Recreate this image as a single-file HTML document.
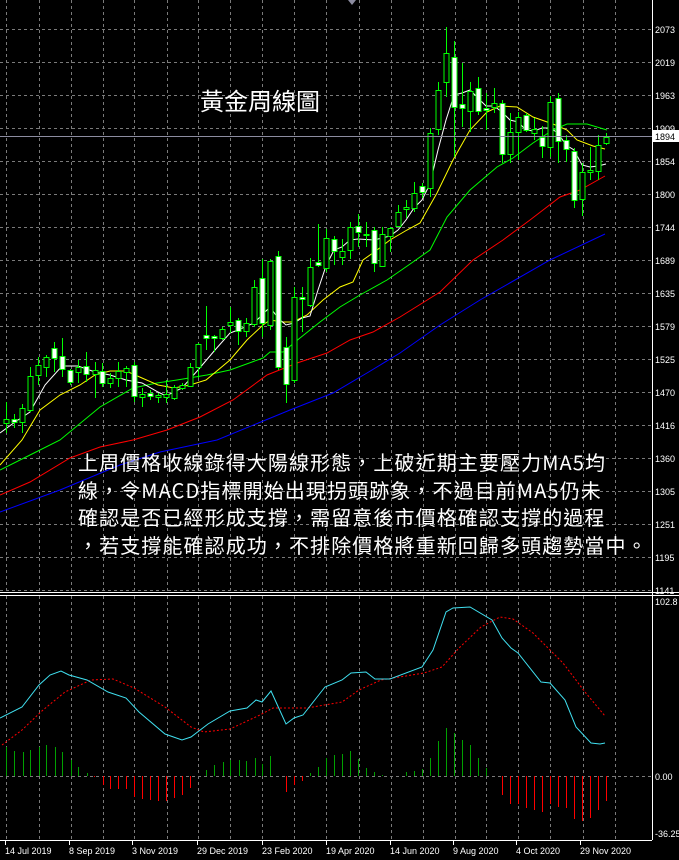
<!DOCTYPE html>
<html><head><meta charset="utf-8">
<style>
html,body{margin:0;padding:0;background:#000;width:679px;height:860px;overflow:hidden}
svg{position:absolute;left:0;top:0}
.t{position:absolute;color:#fff;font-family:"Noto Sans CJK TC","Liberation Sans",sans-serif;white-space:nowrap}
</style></head><body>
<svg id="s" width="679" height="860" xmlns="http://www.w3.org/2000/svg" font-family="Liberation Sans, sans-serif" font-size="9">
<rect width="679" height="860" fill="#000"/>
<g id="grid" stroke="#7a7a7a" stroke-width="1" stroke-dasharray="3,3"></g>
<g id="mas" fill="none" stroke-width="1"></g>
<g id="c"></g>
<g id="macd"></g>
<line x1="0" y1="136.5" x2="652" y2="136.5" stroke="#8c8ca0"/>
<line x1="652.5" y1="0" x2="652.5" y2="840" stroke="#fff"/>
<line x1="0" y1="592.5" x2="679" y2="592.5" stroke="#fff"/>
<line x1="0" y1="595.5" x2="679" y2="595.5" stroke="#fff"/>
<line x1="0" y1="840.5" x2="652" y2="840.5" stroke="#fff"/>
<polygon points="348,0 356,0 352,5" fill="#8c8ca0"/>
<g id="lab" fill="#fff"></g>
<rect x="653" y="130" width="26" height="12" fill="#fff"/>
<text x="655" y="140" fill="#000">1894</text>
</svg>
<div class="t" style="left:200px;top:84px;font-size:24px;line-height:32px">黃金周線圖</div>
<div class="t" style="left:78px;top:448px;font-size:20px;letter-spacing:1.1px;line-height:27.6px">上周價格收線錄得大陽線形態，上破近期主要壓力MA5均<br>線，令MACD指標開始出現拐頭跡象，不過目前MA5仍未<br>確認是否已經形成支撐，需留意後市價格確認支撐的過程<br>，若支撐能確認成功，不排除價格將重新回歸多頭趨勢當中。</div>
<script>
var NS="http://www.w3.org/2000/svg";
function el(p,n,a){var e=document.createElementNS(NS,n);for(var k in a)e.setAttribute(k,a[k]);p.appendChild(e);return e;}
var g=document.getElementById('grid');
var vx=[6,39,71,103,134,167,198,230,262,294,326,359,391,423,455,486,518,550,583,615];
vx.forEach(function(x){el(g,'line',{x1:x+.5,y1:0,x2:x+.5,y2:592});el(g,'line',{x1:x+.5,y1:596,x2:x+.5,y2:840});});
var py=[[2073,29],[2019,62],[1963,95],[1909,128],[1854,161],[1800,194],[1744,227],[1689,260],[1635,293],[1579,326],[1525,359],[1470,392],[1416,425],[1360,458],[1305,491],[1251,524],[1195,557],[1141,590]];
var lab=document.getElementById('lab');
py.forEach(function(p){el(g,'line',{x1:0,y1:p[1]+.5,x2:652,y2:p[1]+.5});var t=el(lab,'text',{x:655,y:p[1]+4});t.textContent=p[0];});
el(g,'line',{x1:0,y1:776.5,x2:652,y2:776.5});
[[102.8,605],['0.00',780],['-36.25',837]].forEach(function(p){var t=el(lab,'text',{x:655,y:p[1]});t.textContent=p[0];});
[['14 Jul 2019',5],['8 Sep 2019',69],['3 Nov 2019',132],['29 Dec 2019',197],['23 Feb 2020',262],['19 Apr 2020',326],['14 Jun 2020',390],['9 Aug 2020',453],['4 Oct 2020',516],['29 Nov 2020',580]].forEach(function(p){var t=el(lab,'text',{x:p[1],y:854});t.textContent=p[0];el(lab,'rect',{x:p[1],y:841,width:1,height:4});});
var m=document.getElementById('mas');
function pl(c,pts,extra){var a={points:pts.map(function(p){return p.join(',')}).join(' '),stroke:c};for(var k in extra)a[k]=extra[k];el(m,'polyline',a);}
pl('#0000ff',[[0,512],[60,490],[120,465],[160,452],[217,440],[290,410],[333,393],[367,373],[400,353],[440,325],[480,300],[550,260],[605,234]]);
pl('#ff0000',[[0,495],[30,482],[70,458],[100,447],[133,440],[167,430],[200,417],[233,400],[267,375],[297,363],[327,353],[350,340],[373,332],[400,317],[440,292],[473,260],[503,240],[530,220],[560,197],[580,190],[605,176]]);
pl('#00ff00',[[0,470],[30,455],[60,440],[100,407],[133,388],[157,383],[177,380],[207,375],[230,370],[263,358],[270,352],[283,352],[300,338],[320,322],[340,307],[360,295],[387,280],[413,262],[430,250],[447,217],[470,190],[497,167],[513,158],[533,143],[553,130],[567,124],[587,124],[607,130]]);
pl('#ffff00',[[0,465],[22,440],[40,410],[60,395],[80,385],[95,375],[110,371],[126,371],[142,378],[158,385],[174,388],[190,385],[206,380],[230,360],[247,340],[263,325],[270,320],[283,322],[293,322],[307,315],[323,300],[340,287],[353,282],[363,260],[377,250],[390,240],[407,230],[420,223],[437,193],[453,160],[470,130],[487,112],[500,106],[517,107],[533,117],[553,124],[567,130],[577,140],[593,146],[605,149]]);
pl('#ffffff',[[0,433],[15,422],[30,412],[45,385],[62,366],[78,366],[95,372],[110,375],[126,380],[142,383],[158,392],[166,396],[182,388],[198,370],[215,350],[230,333],[238,330],[254,323],[262,315],[270,307],[278,318],[286,325],[294,323],[302,318],[310,316],[318,290],[326,266],[334,250],[342,247],[350,240],[358,239],[374,240],[390,236],[398,230],[406,220],[414,208],[422,200],[430,184],[438,150],[446,120],[454,95],[462,93],[470,90],[478,98],[486,106],[494,106],[502,112],[510,120],[518,122],[526,130],[534,131],[542,128],[550,128],[558,133],[566,145],[574,150],[582,165],[590,167],[598,166],[606,164]]);
var C=[[6,419,423,402,433,0],[14,419,422,414,428,1],[22,408,422,404,433,0],[30,376,410,367,412,0],[38,365,375,357,385,0],[46,357,367,355,377,0],[54,348,358,342,372,1],[62,356,369,338,377,1],[70,370,382,369,385,1],[78,367,372,360,383,0],[86,366,374,352,382,1],[95,370,374,362,398,0],[102,371,383,363,387,1],[110,378,383,373,388,0],[118,371,378,362,387,0],[126,368,372,366,387,0],[134,365,396,362,402,1],[142,394,397,388,407,0],[150,393,396,390,400,1],[158,395,397,393,403,0],[166,394,397,380,403,0],[174,387,398,385,400,0],[182,385,388,383,390,0],[190,367,386,363,387,0],[198,344,367,343,378,0],[206,335,338,306,350,1],[214,336,338,335,352,1],[222,329,338,327,340,0],[230,322,325,307,333,0],[238,320,331,318,345,1],[246,323,331,318,337,0],[254,287,324,280,327,0],[262,278,323,259,337,1],[270,261,325,259,330,0],[278,256,367,251,370,1],[286,347,384,337,403,1],[294,297,380,287,383,0],[302,297,299,287,332,1],[310,267,305,258,307,0],[318,262,265,224,267,1],[326,238,268,229,272,0],[334,239,251,236,265,1],[342,251,257,239,265,0],[350,227,250,222,259,0],[358,226,232,214,247,1],[366,234,235,222,247,0],[374,230,263,227,272,1],[382,234,266,227,267,0],[390,228,236,227,252,0],[398,212,226,205,227,0],[406,207,209,200,218,0],[414,193,208,182,212,0],[422,186,192,183,198,1],[430,133,188,128,197,0],[438,90,129,82,135,0],[446,53,82,27,97,0],[454,57,107,41,157,1],[462,104,108,63,127,1],[470,91,111,82,132,0],[478,88,111,77,115,1],[486,108,110,93,130,1],[494,103,107,88,113,0],[502,103,154,100,163,1],[510,132,154,113,163,0],[518,117,132,112,160,0],[526,115,130,113,132,1],[534,129,133,118,140,0],[542,137,146,126,158,1],[550,102,147,96,157,0],[558,98,141,93,163,1],[566,140,149,135,162,1],[574,151,200,148,208,1],[582,172,199,163,216,0],[590,170,172,147,180,0],[598,145,171,135,180,0],[606,137,143,133,145,0]];
var cg=document.getElementById('c');
C.forEach(function(c){var x=c[0];el(cg,'line',{x1:x+.5,y1:c[3],x2:x+.5,y2:c[4],stroke:'#00ff00'});
el(cg,'rect',{x:x-2,y:c[1]+.5,width:5,height:Math.max(1,c[2]-c[1]),fill:c[5]?'#fff':'#000',stroke:'#00ff00','stroke-width':1});});
var mg=document.getElementById('macd');
var H=[[14,29],[33,25],[52,24],[70,26],[89,29],[107,31],[126,29],[144,24],[163,16],[181,9],[200,3],[218,-1],[237,-9],[255,-13],[273,-13],[292,-13],[310,-21],[329,-23],[347,-24],[366,-25],[384,-25],[403,-22],[421,-19],[440,-12],[477,6],[495,11],[514,14],[532,16],[551,16],[569,15],[588,18],[606,12],[624,20],[661,-16],[680,-9],[698,-5],[716,3],[735,9],[753,18],[772,21],[790,22],[809,25],[827,17],[846,8],[864,4],[883,1],[938,4],[957,5],[975,7],[994,18],[1012,35],[1031,48],[1049,43],[1068,36],[1086,31],[1105,18],[1123,8],[1160,-19],[1178,-28],[1197,-28],[1216,-32],[1234,-34],[1253,-36],[1271,-28],[1290,-31],[1308,-32],[1327,-43],[1345,-45],[1364,-42],[1382,-34],[1400,-25]];
H.forEach(function(h){var x=Math.round(h[0]/2.31)+.5;var v=h[1];el(mg,'line',{x1:x,y1:776,x2:x,y2:776-v,stroke:v>0?'#00a000':'#ff0000'});});
function ml(c,pts,extra){var a={points:pts.map(function(p){return p.join(',')}).join(' '),stroke:c,fill:'none'};for(var k in extra)a[k]=extra[k];el(mg,'polyline',a);}
ml('#ff0000',[[2,745],[22,730],[43,710],[65,692],[91,680],[113,679],[134,688],[165,707],[191,727],[204,732],[230,729],[260,715],[273,708],[307,708],[342,702],[359,690],[381,680],[424,673],[442,667],[459,648],[481,627],[500,617],[513,619],[533,633],[563,663],[585,692],[605,716]],{'stroke-dasharray':'2,2'});
ml('#40e0f0',[[0,718],[22,707],[39,685],[50,675],[61,671],[69,675],[87,680],[108,692],[126,698],[139,712],[165,734],[182,740],[191,737],[208,724],[230,711],[247,708],[256,700],[262,702],[271,691],[286,724],[294,718],[303,715],[325,687],[342,680],[351,673],[366,672],[375,679],[390,679],[422,667],[433,650],[446,612],[453,608],[470,607],[492,620],[502,638],[511,648],[518,653],[541,682],[550,683],[565,700],[576,727],[591,743],[600,744],[605,743]]);
</script>
</body></html>
